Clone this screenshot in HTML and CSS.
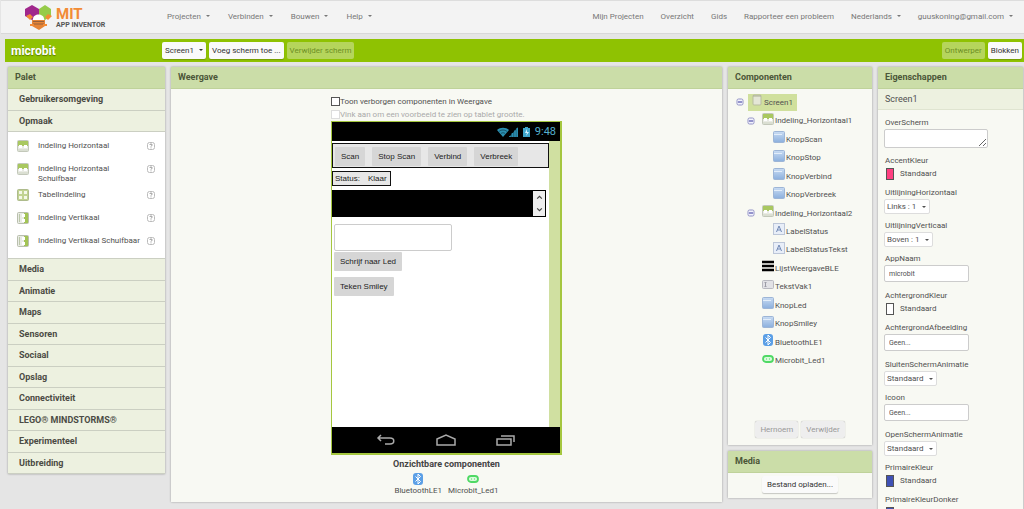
FILE: index.html
```html
<!DOCTYPE html>
<html lang="nl">
<head>
<meta charset="utf-8">
<title>MIT App Inventor</title>
<link rel="stylesheet" href="styles.css">
</head>
<body>
<svg width="0" height="0" class="defs" aria-hidden="true">
  <defs>
    <linearGradient id="blue" x1="0" y1="0" x2="0" y2="1"><stop offset="0" stop-color="#c9dcf3"/><stop offset="1" stop-color="#8bafdd"/></linearGradient>
    <symbol id="i-hor" viewBox="0 0 12 12"><rect x=".5" y=".5" width="11" height="11" rx="1" fill="#e9ebe4" stroke="#c3c8ba"/><path d="M1 1h10v5H1z" fill="#a9c860"/><path d="M2 5h3v3H2zM7 5h3v3H7z" fill="#fff"/><path d="M1 10h10" stroke="#ccd3c0"/></symbol>
    <symbol id="i-ver" viewBox="0 0 12 12"><rect x=".5" y=".5" width="11" height="11" rx="1" fill="#e9ebe4" stroke="#b9bfae"/><path d="M7 1h4v10H7z" fill="#a3c455"/><path d="M5 2h3v3H5zM5 7h3v3H5z" fill="#fff"/><path d="M2.500 2v8" stroke="#bcc7aa"/></symbol>
    <symbol id="i-tab" viewBox="0 0 12 12"><rect x=".5" y=".5" width="11" height="11" rx="1" fill="#c1d391" stroke="#aebb8c"/><path d="M2 2h3v3H2zM7 2h3v3H7zM2 7h3v3H2zM7 7h3v3H7z" fill="#f4f8e8"/></symbol>
    <symbol id="i-btn" viewBox="0 0 12 12"><rect x=".5" y=".5" width="11" height="11" rx="1" fill="url(#blue)" stroke="#9db5d6"/><path d="M1 3.500h8" stroke="#e2edfa"/></symbol>
    <symbol id="i-lab" viewBox="0 0 12 12"><rect x=".5" y=".5" width="11" height="11" fill="#e8eef8" stroke="#bcc6d8"/><path d="M3.500 9L6 3l2.500 6M4.500 7h3" fill="none" stroke="#7189b5"/></symbol>
    <symbol id="i-list" viewBox="0 0 12 12"><path d="M0 2h12M0 6h12M0 10h12" stroke="#000" stroke-width="2.500"/></symbol>
    <symbol id="i-text" viewBox="0 0 12 12"><rect x=".5" y="1.500" width="11" height="8" rx="1" fill="#e2e2e6" stroke="#b9b9c0"/><path d="M2.500 3.500h2M3.500 3.500v4M2.500 7.500h2" stroke="#9c9ca6" fill="none"/></symbol>
    <symbol id="i-bt" viewBox="0 0 12 12"><rect x="1" y="0" width="10" height="12" rx="3" fill="#5b9fe6"/><path d="M3.500 3.500l5 5L6 11V1l2.500 2.500-5 5" fill="none" stroke="#fff"/></symbol>
    <symbol id="i-led" viewBox="0 0 12 12"><rect x="1" y="3" width="10" height="6" rx="3" fill="#d9fbdc" stroke="#4fd965" stroke-width="1.800"/><path d="M4 6h1M7 6h1" stroke="#4fd965"/></symbol>
    <symbol id="i-scr" viewBox="0 0 12 12"><rect x="2" y="1" width="8" height="10" rx="1" fill="#e4e6d6" stroke="#b8bda0"/><path d="M2 2h8" stroke="#a9ad93"/></symbol>
    <symbol id="i-help" viewBox="0 0 8 8"><rect x=".5" y=".5" width="7" height="7" rx="2" fill="#fff" stroke="#bbb"/><path d="M2.800 3c0-1.400 2.400-1.400 2.400 0 0 .8-1.200.8-1.200 1.600M4 5.500v.8" fill="none" stroke="#777" stroke-width=".8"/></symbol>
    <symbol id="i-min" viewBox="0 0 8 8"><rect x="1" y="1" width="6" height="6" rx="1.500" fill="#f3f3fd" stroke="#9393c6"/><path d="M2 4h4" stroke="#34349a"/></symbol>
  </defs>
</svg>

<header class="top">
  <a class="logo" href="#" aria-label="MIT App Inventor">
    <svg class="logo-mark" viewBox="0 0 28 25" aria-hidden="true">
      <path d="M7 0l7 4v7l-7 4-7-4V4z" fill="#a0278c"/>
      <path d="M20 0l6 4v7l-6 4-6-4V4z" fill="#96cb49"/>
      <path d="M1 11l4-2 3 3-3 3zM27 11l-4-2-3 3 3 3z" fill="#f28b35"/>
      <path d="M8 14c0-6 11-6 11 0v3H8z" fill="#fff"/>
      <path d="M7 15h13v6l-6 4-7-4z" fill="#e58437"/>
      <path d="M8 16.500h11M8 19h11" stroke="#96613c"/>
      <path d="M5 20h4M18 20h4" stroke="#f28b35" stroke-width="2"/>
    </svg>
    <span class="logo-text"><b class="mit">MIT</b><b class="app">APP INVENTOR</b></span>
  </a>
  <nav class="menus">
    <button class="menu caret">Projecten</button>
    <button class="menu caret">Verbinden</button>
    <button class="menu caret">Bouwen</button>
    <button class="menu caret">Help</button>
  </nav>
  <nav class="links">
    <a href="#">Mijn Projecten</a>
    <a href="#">Overzicht</a>
    <a href="#">Gids</a>
    <a href="#">Rapporteer een probleem</a>
    <button class="menu caret">Nederlands</button>
    <button class="menu caret">guuskoning@gmail.com</button>
  </nav>
</header>

<div class="bar">
  <h1 class="project">microbit</h1>
  <div class="group">
    <button class="btn caret">Screen1</button>
    <button class="btn">Voeg scherm toe ...</button>
    <button class="btn off" disabled>Verwijder scherm</button>
  </div>
  <div class="group end">
    <button class="btn off" disabled>Ontwerper</button>
    <button class="btn">Blokken</button>
  </div>
</div>

<main class="cols">
  <section class="panel palette">
    <h2>Palet</h2>
    <div class="cats two"><button class="cat">Gebruikersomgeving</button><button class="cat">Opmaak</button></div>
    <ul class="items">
      <li><svg class="ic"><use href="#i-hor"/></svg><span>Indeling Horizontaal</span><svg class="help"><use href="#i-help"/></svg></li>
      <li><svg class="ic"><use href="#i-hor"/></svg><span>Indeling Horizontaal Schuifbaar</span><svg class="help"><use href="#i-help"/></svg></li>
      <li><svg class="ic"><use href="#i-tab"/></svg><span>TabelIndeling</span><svg class="help"><use href="#i-help"/></svg></li>
      <li><svg class="ic"><use href="#i-ver"/></svg><span>Indeling Vertikaal</span><svg class="help"><use href="#i-help"/></svg></li>
      <li><svg class="ic"><use href="#i-ver"/></svg><span>Indeling Vertikaal Schuifbaar</span><svg class="help"><use href="#i-help"/></svg></li>
    </ul>
    <div class="cats ten">
      <button class="cat">Media</button><button class="cat">Animatie</button><button class="cat">Maps</button><button class="cat">Sensoren</button><button class="cat">Sociaal</button><button class="cat">Opslag</button><button class="cat">Connectiviteit</button><button class="cat">LEGO® MINDSTORMS®</button><button class="cat">Experimenteel</button><button class="cat">Uitbreiding</button>
    </div>
  </section>

  <section class="panel viewer">
    <h2>Weergave</h2>
    <div class="stage">
      <label class="check"><input type="checkbox">Toon verborgen componenten in Weergave</label>
      <label class="check dim"><input type="checkbox" disabled>Vink aan om een voorbeeld te zien op tablet grootte.</label>
      <div class="phone">
        <div class="status">
          <svg width="12" height="10" viewBox="0 0 12 10"><path d="M0 3c3-3 9-3 12 0L6 10z" fill="#2c8fb0"/><path d="M2 4.500c2-2 6-2 8 0M4 6.500c1-1 3-1 4 0" fill="none" stroke="#0d3c4c" stroke-width=".7"/></svg>
          <svg width="9" height="10" viewBox="0 0 9 10"><path d="M0 10L9 0v10z" fill="#1d5f77"/><path d="M1 10V9M3.500 10V6M6 10V3.500M8.300 10V1" stroke="#2c8fb0" stroke-width="1.600"/></svg>
          <svg class="bat" width="7" height="10" viewBox="0 0 7 10"><path d="M0 1h2V0h3v1h2v9H0z" fill="#3fa5cb"/><path d="M4 2L2 6h2L3 9l3-4H4z" fill="#d8f3ff"/></svg>
          <span>9:48</span>
        </div>
        <div class="screen">
          <div class="canvas">
            <div class="hbox wide"><button class="pbtn">Scan</button><button class="pbtn">Stop Scan</button><button class="pbtn">Verbind</button><button class="pbtn">Verbreek</button></div>
            <div class="hbox label"><span>Status:</span><span>Klaar</span></div>
            <div class="list"><div class="scroll"><svg viewBox="0 0 6 4"><path d="M1 3l2-2 2 2"/></svg><svg viewBox="0 0 6 4"><path d="M1 1l2 2 2-2"/></svg></div></div>
            <input class="ptext" type="text" aria-label="TekstVak1">
            <button class="pbtn own">Schrijf naar Led</button>
            <button class="pbtn own">Teken Smiley</button>
          </div>
        </div>
        <div class="navbar">
          <svg width="20" height="12" viewBox="0 0 20 12"><path d="M5 1L2 4l3 3M2 4h12c5 0 5 6 0 6H9"/></svg>
          <svg width="20" height="12" viewBox="0 0 20 12"><path d="M1 5l9-4 9 4v6H1z"/></svg>
          <svg width="20" height="12" viewBox="0 0 20 12"><path d="M1 5h14v6H1zM5 2h13v6"/></svg>
        </div>
      </div>
      <h3>Onzichtbare componenten</h3>
      <div class="hidden-comps">
        <figure><svg class="ic"><use href="#i-bt"/></svg><figcaption>BluetoothLE1</figcaption></figure>
        <figure><svg class="ic"><use href="#i-led"/></svg><figcaption>Microbit_Led1</figcaption></figure>
      </div>
    </div>
  </section>

  <div class="stack">
    <section class="panel comps">
      <h2>Componenten</h2>
      <ul class="tree">
        <li><svg class="min"><use href="#i-min"/></svg><span class="node sel"><svg class="ic"><use href="#i-scr"/></svg>Screen1</span></li>
        <li class="d1"><svg class="min"><use href="#i-min"/></svg><span class="node"><svg class="ic"><use href="#i-hor"/></svg>Indeling_Horizontaal1</span></li>
        <li class="d2"><span class="node"><svg class="ic"><use href="#i-btn"/></svg>KnopScan</span></li>
        <li class="d2"><span class="node"><svg class="ic"><use href="#i-btn"/></svg>KnopStop</span></li>
        <li class="d2"><span class="node"><svg class="ic"><use href="#i-btn"/></svg>KnopVerbind</span></li>
        <li class="d2"><span class="node"><svg class="ic"><use href="#i-btn"/></svg>KnopVerbreek</span></li>
        <li class="d1"><svg class="min"><use href="#i-min"/></svg><span class="node"><svg class="ic"><use href="#i-hor"/></svg>Indeling_Horizontaal2</span></li>
        <li class="d2"><span class="node"><svg class="ic"><use href="#i-lab"/></svg>LabelStatus</span></li>
        <li class="d2"><span class="node"><svg class="ic"><use href="#i-lab"/></svg>LabelStatusTekst</span></li>
        <li class="leaf"><span class="node"><svg class="ic"><use href="#i-list"/></svg>LijstWeergaveBLE</span></li>
        <li class="leaf"><span class="node"><svg class="ic"><use href="#i-text"/></svg>TekstVak1</span></li>
        <li class="leaf"><span class="node"><svg class="ic"><use href="#i-btn"/></svg>KnopLed</span></li>
        <li class="leaf"><span class="node"><svg class="ic"><use href="#i-btn"/></svg>KnopSmiley</span></li>
        <li class="leaf"><span class="node"><svg class="ic"><use href="#i-bt"/></svg>BluetoothLE1</span></li>
        <li class="leaf"><span class="node"><svg class="ic"><use href="#i-led"/></svg>Microbit_Led1</span></li>
      </ul>
      <div class="actions"><button class="btn grey" disabled>Hernoem</button><button class="btn grey" disabled>Verwijder</button></div>
    </section>
    <section class="panel media">
      <h2>Media</h2>
      <div class="upload"><button class="btn">Bestand opladen...</button></div>
    </section>
  </div>

  <section class="panel props">
    <h2>Eigenschappen</h2>
    <div class="target">Screen1</div>
    <form class="form">
      <label for="about">OverScherm</label>
      <div class="field area"><textarea id="about"></textarea></div>
      <label for="accent">AccentKleur</label>
      <div class="field color"><button type="button" id="accent"><i class="sw pink"></i>Standaard</button></div>
      <label for="alh">UitlijningHorizontaal</label>
      <div class="field pick"><span class="drop caret"><select id="alh"><option>Links : 1</option></select></span></div>
      <label for="alv">UitlijningVerticaal</label>
      <div class="field pick"><span class="drop caret"><select id="alv"><option>Boven : 1</option></select></span></div>
      <label for="app">AppNaam</label>
      <div class="field text"><input id="app" type="text" value="microbit"></div>
      <label for="bgc">AchtergrondKleur</label>
      <div class="field color"><button type="button" id="bgc"><i class="sw white"></i>Standaard</button></div>
      <label for="bgi">AchtergrondAfbeelding</label>
      <div class="field text"><input id="bgi" type="text" value="Geen..."></div>
      <label for="close">SluitenSchermAnimatie</label>
      <div class="field pick"><span class="drop caret"><select id="close"><option>Standaard</option></select></span></div>
      <label for="icon">Icoon</label>
      <div class="field text"><input id="icon" type="text" value="Geen..."></div>
      <label for="open">OpenSchermAnimatie</label>
      <div class="field pick"><span class="drop caret"><select id="open"><option>Standaard</option></select></span></div>
      <label for="prim">PrimaireKleur</label>
      <div class="field color"><button type="button" id="prim"><i class="sw blue"></i>Standaard</button></div>
      <label for="primd">PrimaireKleurDonker</label>
      <div class="field color"><button type="button" id="primd"><i class="sw blue"></i></button></div>
    </form>
  </section>
</main>
</body>
</html>
```
FILE: styles.css
```css
* { box-sizing: border-box; }
body {
  margin: 0;
  height: 100vh;
  overflow: hidden;
  background: #e5e5e5;
  color: #505050;
  font: 8px/12px Roboto, "Liberation Sans", sans-serif;
}
h1, h2, h3, ul, figure { margin: 0; padding: 0; }
ul { list-style: none; }
svg { display: block; flex: none; }
.defs { position: absolute; }
button, input, select, textarea { font: inherit; color: inherit; margin: 0; }
button { border: 0; background: none; padding: 0; white-space: nowrap; }
a { color: inherit; text-decoration: none; }

.caret::after {
  content: "";
  display: inline-block;
  margin-left: 5px;
  border: 2px solid transparent;
  border-top-color: currentColor;
  border-bottom: 0;
  vertical-align: 2px;
}

.top {
  display: flex;
  align-items: center;
  height: 34px;
  margin-left: 1px;
  padding: 0 11px 0 24px;
  background: #f3f3f3;
  border-top: 1px solid #ddd;
  border-bottom: 1px solid #d8d8d8;
  color: #777;
}
.logo { display: flex; align-items: flex-start; gap: 3px; width: 142px; }
.logo-mark { width: 28px; height: 25px; }
.logo-text { display: flex; flex-direction: column; padding-top: 3px; }
.mit { font-size: 15px; line-height: 13px; color: #f28b35; }
.app { font-size: 7px; line-height: 8px; color: #555; white-space: nowrap; }
.menus { display: flex; gap: 18px; }
.links { display: flex; gap: 17px; margin-left: auto; }

.bar {
  display: flex;
  align-items: center;
  height: 23px;
  margin: 5px 0 5px 5px;
  padding: 0 2px 0 6px;
  background: #8fc202;
}
.project { width: 151px; font-size: 12px; line-height: 16px; color: #fff; text-shadow: 0 1px 1px #5c7d00; }
.group { display: flex; gap: 3px; }
.end { margin-left: auto; }
.btn {
  height: 17px;
  padding: 0 5px;
  background: #fafafa;
  border-radius: 2px;
  color: #333;
  box-shadow: 0 1px 1px #0003;
}
.bar .btn { padding: 0 3px; }
.btn.off { background: #b5d55c; color: #6d8f24; box-shadow: none; }
.btn.grey { background: #eee; color: #999; box-shadow: 0 0 1px #0006; }

.cols {
  display: grid;
  grid-template-columns: 157px 1fr 144px 145px;
  align-items: start;
  gap: 6px;
  padding: 0 1px 0 8px;
}
.panel { background: #f8f9f3; box-shadow: 0 0 2px #0005; }
.panel h2 {
  height: 22px;
  padding-left: 7px;
  background: #cbdda8;
  border-bottom: 1px solid #bfd29a;
  font-size: 9px;
  line-height: 21px;
  color: #4b5638;
}

.cats { display: grid; grid-auto-rows: 1fr; }
.two { height: 43px; }
.ten { height: 215px; }
.cat {
  padding-left: 11px;
  background: #edf1e0;
  border-bottom: 1px solid #cbcfc2;
  text-align: left;
  font-size: 9px;
  font-weight: bold;
  color: #4b4b44;
}
.items { height: 127px; padding-top: 5px; background: #fff; border-bottom: 1px solid #cbcfc2; }
.items li { display: flex; gap: 9px; padding: 3px 10px 7px 9px; line-height: 10px; min-height: 23px; }
.items li:nth-child(2) { padding-bottom: 2px; }
.items span { flex: 1; padding-top: 1px; margin-right: -9px; }
.ic { width: 12px; height: 12px; }
.help { width: 8px; height: 8px; margin-top: 2px; }

.stage { display: flex; flex-direction: column; align-items: center; padding: 6px 0 5px; }
.check { display: flex; align-items: center; width: 231px; height: 13px; white-space: nowrap; }
.check input {
  appearance: none;
  flex: none;
  width: 9px;
  height: 9px;
  background: #fff;
  border: 1px solid #555;
}
.dim { color: #aaa; }
.dim input { border-color: #ddd; }
.phone { width: 231px; border: 2px solid #a5c73f; border-width: 1px 2px 2px 1px; }
.status {
  display: flex;
  align-items: center;
  justify-content: flex-end;
  height: 19px;
  padding-right: 4px;
  background: #000;
  color: #55b0cf;
  font-size: 11px;
}
.bat { margin: 0 5px; }
.screen { height: 286px; padding-right: 11px; background: #d0e0a1; }
.canvas { height: 100%; padding-top: 2px; background: #fff; display: flex; flex-direction: column; align-items: flex-start; font-family: "Liberation Sans", Arial, sans-serif; color: #222; }
.hbox { display: flex; border: 1px solid #111; background: #e7e7e7; }
.wide { align-self: stretch; gap: 7px; padding: 3px 2px; height: 25px; }
.label { gap: 8px; height: 15px; margin-top: 3px; padding: 0 3px 0 2px; line-height: 13px; }
.pbtn { height: 19px; padding: 0 6px; background: #d6d6d6; color: #222; border-radius: 1px; }
.list { align-self: stretch; display: flex; justify-content: flex-end; height: 27px; margin: 4px 3px 0 0; padding: 1px; background: #000; }
.scroll { display: flex; flex-direction: column; justify-content: space-between; align-items: center; width: 12px; padding: 4px 0; background: #eee; }
.scroll svg { width: 7px; height: 5px; fill: none; stroke: #444; }
.ptext { width: 118px; height: 27px; margin: 7px 0 1px 2px; border: 1px solid #ccc; border-radius: 2px; background: #fff; }
.own { margin: 0 0 6px 2px; }
.navbar { display: flex; justify-content: center; gap: 40px; align-items: center; height: 26px; background: #000; }
.navbar svg { fill: none; stroke: #aaa; stroke-width: 1.5; }
.stage h3 { margin-top: 3px; font-size: 9px; line-height: 12px; color: #444; }
.hidden-comps { display: flex; gap: 6px; padding-top: 3px; }
.hidden-comps figure { display: flex; flex-direction: column; align-items: center; }

.stack { display: grid; gap: 6px; }
.comps { height: 378px; display: flex; flex-direction: column; }
.tree { display: grid; grid-auto-rows: 1fr; height: 277px; margin-top: 4px; padding-left: 8px; }
.tree li { display: flex; align-items: center; gap: 4px; }
.min { width: 8px; height: 8px; }
.node { display: flex; align-items: center; gap: 1px; height: 17px; line-height: 17px; }
.node .ic { margin-bottom: 4px; }
.sel { padding: 0 4px 0 3px; background: #d0e09d; }
.tree .d1 { padding-left: 11px; gap: 7px; }
.tree .d2 { padding-left: 37px; }
.tree .leaf { padding-left: 26px; }
.actions { display: flex; justify-content: center; gap: 3px; margin-top: auto; padding-bottom: 7px; }
.upload { display: flex; justify-content: center; padding: 3px 0 5px; }

.target { height: 21px; padding-left: 7px; background: #edf1e0; border-bottom: 1px solid #dfe4d0; line-height: 21px; font-size: 9px; }
.form { display: flex; flex-direction: column; padding: 7px 6px; }
.form label { height: 12px; padding-left: 1px; }
.area { height: 26px; }
.text { height: 25px; }
.color { height: 20px; }
.pick { height: 21px; }
.area textarea { display: block; width: 104px; height: 19px; border: 1px solid #ccc; border-radius: 2px; }
.text input { display: block; width: 85px; height: 17px; padding: 0 4px; border: 1px solid #ccc; border-radius: 2px; background: #fff; font-size: 7px; }
.color button { display: flex; align-items: center; gap: 6px; height: 13px; padding-left: 2px; }
.sw { width: 8px; height: 12px; border: 1px solid #555; }
.pink { background: #ff4081; }
.white { background: #fff; }
.blue { background: #3f51b5; }
.drop { display: inline-flex; align-items: center; height: 15px; padding: 0 3px 0 2px; background: #fff; border: 1px solid #ddd; border-radius: 2px; }
.drop select { appearance: none; border: 0; padding: 0; background: none; }
```
